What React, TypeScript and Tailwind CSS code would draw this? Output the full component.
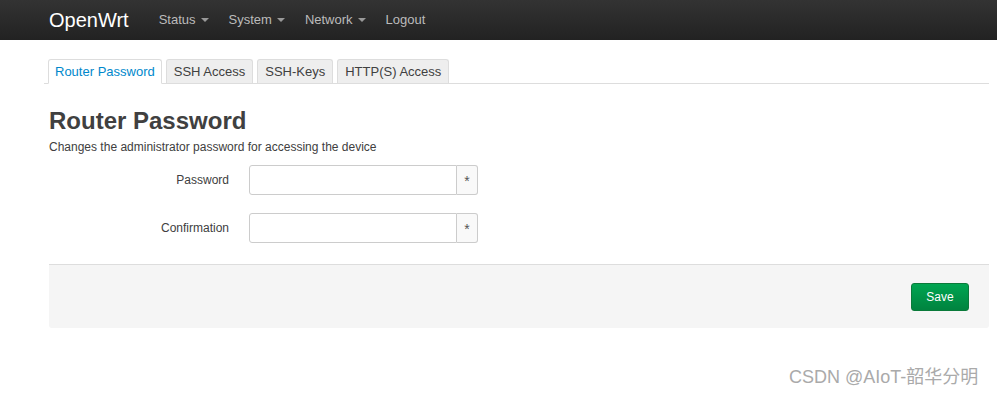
import React from "react"

const font = { fontFamily: '"Liberation Sans", Arial, sans-serif' }

function Caret() {
  return <span className="ml-[5px] inline-block h-0 w-0 border-x-[4px] border-t-[4px] border-x-transparent border-t-[#999] align-middle" />
}

const menu = [
  { label: "Status", caret: true },
  { label: "System", caret: true },
  { label: "Network", caret: true },
  { label: "Logout", caret: false },
]

const tabs = ["Router Password", "SSH Access", "SSH-Keys", "HTTP(S) Access"]

function Field({ label }: { label: string }) {
  return (
    <div className="flex items-center">
      <label className="w-[200px] pr-[20px] text-right text-[12px] text-[#404040]">{label}</label>
      <div className="flex h-[30px] w-[229px]">
        <input
          type="password"
          className="h-full min-w-0 flex-1 rounded-l-[3px] border border-[#ccc] bg-white px-2 outline-none"
        />
        <span className="flex h-full w-[21px] shrink-0 items-center justify-center rounded-r-[3px] border border-l-0 border-[#ccc] bg-[#f9f9f9] pt-[3px] text-[14px] text-[#555]">
          *
        </span>
      </div>
    </div>
  )
}

export default function App() {
  return (
    <div className="relative h-[395px] w-[997px] overflow-hidden bg-white" style={font}>
      <header className="flex h-[40px] items-center bg-gradient-to-b from-[#333] to-[#222] pl-[49px]">
        <span className="text-[20px] leading-none text-white">OpenWrt</span>
        <nav className="ml-[30px] flex items-center">
          {menu.map((m) => (
            <span key={m.label} className="mr-[20px] flex items-center text-[13px] text-[#bbb]">
              {m.label}
              {m.caret && <Caret />}
            </span>
          ))}
        </nav>
      </header>

      <main className="pl-[49px] pr-[8px]">
        <ul className="-ml-[5px] mt-[19px] flex border-b border-[#ddd] pl-[4px]">
          {tabs.map((t, i) => (
            <li
              key={t}
              className={
                i === 0
                  ? "-mb-px mr-[4px] rounded-t-[3px] border border-[#ddd] border-b-white bg-white px-[6px] pb-[4px] pt-[4px] text-[13px] leading-[15px] text-[#0088cc]"
                  : "mr-[4px] rounded-t-[3px] border border-b-0 border-[#ddd] bg-[#eee] px-[7px] pb-[4px] pt-[4px] text-[13px] leading-[15px] text-[#404040]"
              }
            >
              {t}
            </li>
          ))}
        </ul>

        <h2 className="mt-[22px] text-[24px] font-bold leading-[30px] text-[#404040]">Router Password</h2>
        <p className="mt-[2px] text-[12px] text-[#404040]">Changes the administrator password for accessing the device</p>

        <div className="mt-[9px] flex flex-col gap-[18px]">
          <Field label="Password" />
          <Field label="Confirmation" />
        </div>

        <div className="mt-[21px] flex h-[64px] items-center justify-end rounded-b-[3px] border-t border-[#ddd] bg-[#f5f5f5] pr-[20px]">
          <button className="h-[28px] w-[58px] rounded-[3px] border border-[#0a7a3a] bg-gradient-to-b from-[#00a551] to-[#00833f] text-[12px] text-white">
            Save
          </button>
        </div>
      </main>

      <div
        className="absolute left-[789px] top-[364px] text-[18px] text-[#aaa]"
        style={{ fontFamily: '"Liberation Sans", "Noto Sans CJK SC", sans-serif' }}
      >
        CSDN @AIoT-韶华分明
      </div>
    </div>
  )
}
